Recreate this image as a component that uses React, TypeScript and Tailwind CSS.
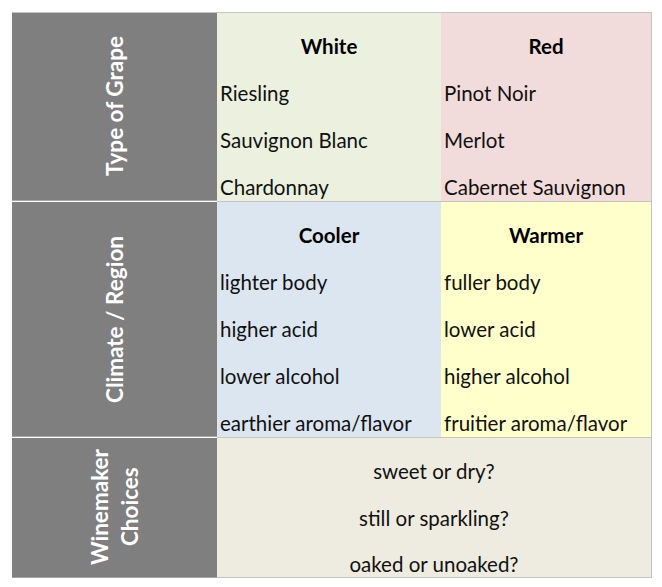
const font = { fontFamily: "Lato, 'Open Sans', sans-serif" };

type Cell = {
  title: string;
  items: string[];
  bg: string;
};

function DataCell({ title, items, bg }: Cell) {
  return (
    <div className={`flex flex-col border-b border-[#c4c4c4] ${bg}`}>
      <div className="flex h-[47px] items-end justify-center pb-[1px] text-[20.5px] font-bold leading-[26px] text-black">
        {title}
      </div>
      {items.map((item) => (
        <div
          key={item}
          className="flex h-[47px] items-end px-[3px] pb-[1px] text-[20.5px] leading-[26px] text-[#111]"
        >
          {item}
        </div>
      ))}
    </div>
  );
}

function Label({ lines, h }: { lines: string[]; h: string }) {
  return (
    <div
      className={`flex items-center justify-center border-b border-[#a6a6a6] bg-[#7f7f7f] ${h}`}
    >
      <div className="rotate-180 text-center text-[22.5px] font-bold leading-[30px] text-white [writing-mode:vertical-rl]">
        {lines.map((l) => (
          <div key={l}>{l}</div>
        ))}
      </div>
    </div>
  );
}

export default function App() {
  return (
    <div className="min-h-[587px] w-[662px] bg-white pl-[12px] pt-[12px]" style={font}>
      <div className="grid w-[640px] grid-cols-[205px_224px_211px] border-t border-[#c4c4c4]">
        <Label lines={["Type of Grape"]} h="h-[188px]" />
        <DataCell
          title="White"
          items={["Riesling", "Sauvignon Blanc", "Chardonnay"]}
          bg="bg-[#ebf1de]"
        />
        <div className="border-r border-[#c4c4c4]">
          <DataCell
            title="Red"
            items={["Pinot Noir", "Merlot", "Cabernet Sauvignon"]}
            bg="bg-[#f2dcdb]"
          />
        </div>

        <Label lines={["Climate / Region"]} h="h-[235px]" />
        <DataCell
          title="Cooler"
          items={["lighter body", "higher acid", "lower alcohol", "earthier aroma/flavor"]}
          bg="bg-[#dce6f1]"
        />
        <div className="border-r border-[#c4c4c4]">
          <DataCell
            title="Warmer"
            items={["fuller body", "lower acid", "higher alcohol", "fruitier aroma/flavor"]}
            bg="bg-[#ffffcc]"
          />
        </div>

        <Label lines={["Winemaker", "Choices"]} h="h-[140px]" />
        <div className="col-span-2 flex flex-col border-b border-r border-[#c4c4c4] bg-[#eeece1]">
          {["sweet or dry?", "still or sparkling?", "oaked or unoaked?"].map((t) => (
            <div
              key={t}
              className="flex h-[46.3px] items-end justify-center text-[20.5px] leading-[26px] text-[#111]"
            >
              {t}
            </div>
          ))}
        </div>
      </div>
    </div>
  );
}
